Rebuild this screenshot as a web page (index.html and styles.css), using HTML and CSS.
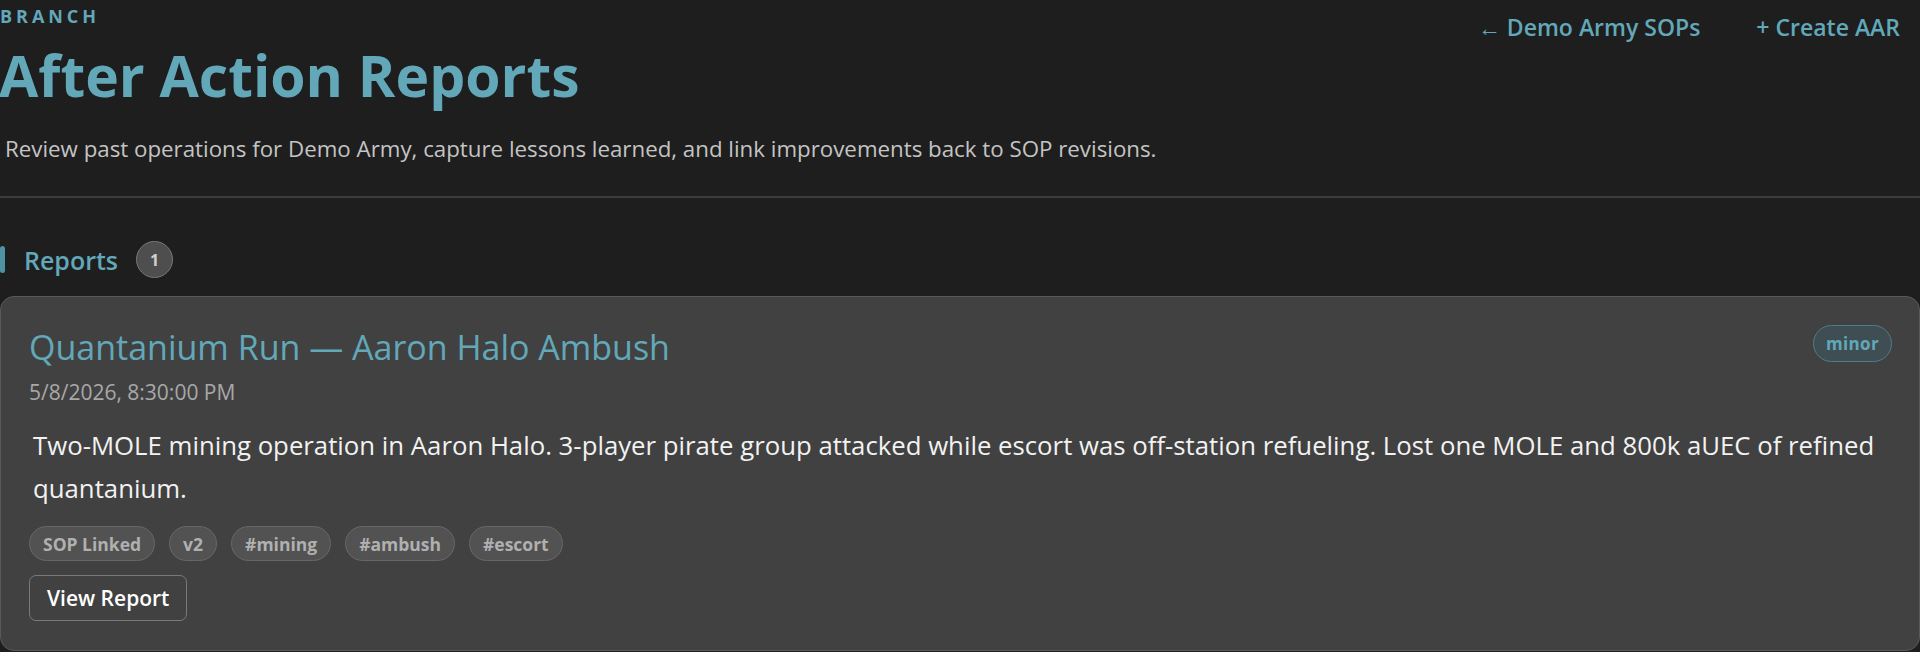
FILE: index.html
```html
<!DOCTYPE html>
<html lang="en">
<head>
<meta charset="utf-8">
<title>After Action Reports</title>
<link rel="stylesheet" href="styles.css">
</head>
<body>
<div class="page">
  <header class="page-header">
    <div class="header-main">
      <div class="eyebrow">BRANCH</div>
      <h1 class="page-title">After Action Reports</h1>
      <p class="page-subtitle">Review past operations for Demo Army, capture lessons learned, and link improvements back to SOP revisions.</p>
    </div>
    <nav class="header-actions">
      <a class="header-link" href="#">← Demo Army SOPs</a>
      <a class="header-link" href="#">+ Create AAR</a>
    </nav>
  </header>
  <hr class="divider">
  <section class="reports">
    <div class="section-heading">
      <span class="section-bar"></span>
      <h2 class="section-title">Reports</h2>
      <span class="count-badge">1</span>
    </div>
    <article class="report-card">
      <div class="card-head">
        <h3 class="card-title">Quantanium Run — Aaron Halo Ambush</h3>
        <span class="severity">minor</span>
      </div>
      <div class="card-date">5/8/2026, 8:30:00 PM</div>
      <p class="card-desc">Two-MOLE mining operation in Aaron Halo. 3-player pirate group attacked while escort was off-station refueling. Lost one MOLE and 800k aUEC of refined quantanium.</p>
      <div class="tags">
        <span class="tag">SOP Linked</span>
        <span class="tag">v2</span>
        <span class="tag">#mining</span>
        <span class="tag">#ambush</span>
        <span class="tag">#escort</span>
      </div>
      <a class="btn" href="#">View Report</a>
    </article>
  </section>
</div>
</body>
</html>
```
FILE: styles.css
```css
* { box-sizing: border-box; }
html, body {
  margin: 0;
  padding: 0;
  background: #1e1e1e;
}
body {
  font-family: "Open Sans", "Noto Sans", sans-serif;
  color: #e8e8e8;
}
.page {
  width: 1920px;
}
.page-header {
  display: flex;
  justify-content: space-between;
  align-items: flex-start;
  padding: 4px 20px 0 0;
}
.eyebrow {
  font-size: 18px;
  font-weight: 700;
  letter-spacing: 0.22em;
  color: #62a8b9;
  line-height: 24px;
}
.page-title {
  margin: 15px 0 0 -1px;
  font-size: 57px;
  line-height: 64px;
  font-weight: 700;
  color: #62a8b9;
}
.page-subtitle {
  margin: 27px 0 0 5px;
  font-size: 22.3px;
  line-height: 30px;
  color: #c4c4c4;
}
.header-actions {
  display: flex;
  gap: 56px;
  padding-top: 8px;
}
.header-link {
  font-size: 23px;
  font-weight: 600;
  color: #62a8b9;
  text-decoration: none;
  line-height: 30px;
}
.divider {
  margin: 32px 0 0 0;
  border: 0;
  border-top: 2px solid #3c3c3c;
}
.reports {
  padding-top: 43px;
}
.section-heading {
  display: flex;
  align-items: center;
  height: 37px;
}
.section-bar {
  width: 5px;
  height: 27px;
  border-radius: 3px;
  background: #4f93a3;
}
.section-title {
  margin: 0 0 0 19px;
  font-size: 25px;
  font-weight: 600;
  color: #62a8b9;
}
.count-badge {
  margin-left: 18px;
  width: 37px;
  height: 37px;
  border-radius: 50%;
  background: #4e4e4e;
  border: 1px solid #777;
  color: #d0d0d0;
  font-size: 16px;
  font-weight: 700;
  display: flex;
  align-items: center;
  justify-content: center;
}
.report-card {
  margin-top: 18px;
  background: #414141;
  border: 1px solid #595959;
  border-radius: 14px;
  padding: 28px 27px 29px 28px;
}
.card-head {
  display: flex;
  justify-content: space-between;
  align-items: flex-start;
}
.card-title {
  margin: 0;
  font-size: 34px;
  line-height: 44px;
  font-weight: 500;
  color: #62a8b9;
}
.severity {
  border: 1px solid #4b7e8b;
  background: #3f4e53;
  color: #62a8b9;
  border-radius: 19px;
  font-size: 17px;
  font-weight: 700;
  height: 37px;
  padding: 0 12px;
  display: flex;
  align-items: center;
  letter-spacing: 0.02em;
}
.card-date {
  margin-top: 9px;
  font-size: 21px;
  line-height: 28px;
  color: #a8a8a8;
}
.card-desc {
  margin: 18px 0 0 4px;
  font-size: 25.75px;
  line-height: 43px;
  color: #f2f2f2;
}
.tags {
  margin-top: 16px;
  display: flex;
  gap: 14px;
}
.tag {
  height: 35px;
  padding: 0 13px;
  border-radius: 18px;
  background: #525252;
  border: 1px solid #676767;
  color: #b0b0b0;
  font-size: 17.5px;
  font-weight: 700;
  display: flex;
  align-items: center;
}
.btn {
  margin-top: 14px;
  display: inline-flex;
  align-items: center;
  height: 46px;
  padding: 0 17px;
  border: 1px solid #7a7a7a;
  border-radius: 7px;
  color: #ffffff;
  font-size: 21px;
  font-weight: 600;
  text-decoration: none;
}
```
